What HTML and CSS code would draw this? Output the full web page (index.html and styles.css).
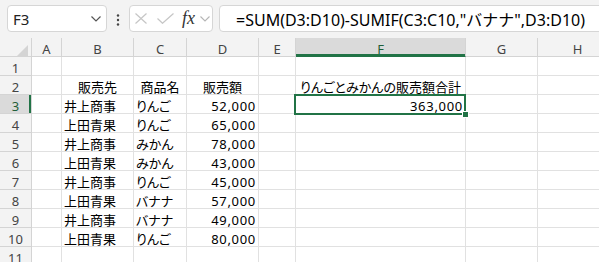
FILE: index.html
```html
<!DOCTYPE html>
<html lang="ja">
<head>
 <meta charset="UTF-8">
 <title>Excel SUMIF</title>
 <link rel="stylesheet" href="styles.css">
</head>
<body>
<div class="toolbar">
 <div class="namebox">
  <span>F3</span>
  <svg width="10" height="6" viewBox="0 0 10 6"><polyline points="0.5,0.5 5,5 9.5,0.5" fill="none" stroke="#555" stroke-width="1.2"/></svg>
 </div>
 <div class="grip">
  <svg width="4" height="12" viewBox="0 0 4 12"><circle cx="2" cy="1.5" r="1.2" fill="#444"/><circle cx="2" cy="6" r="1.2" fill="#444"/><circle cx="2" cy="10.5" r="1.2" fill="#444"/></svg>
 </div>
 <div class="fxbox">
  <svg class="cancel" width="12" height="11" viewBox="0 0 12 11"><path d="M0.5 0.5 L11.5 10.5 M11.5 0.5 L0.5 10.5" stroke="#c6c6c6" stroke-width="1.2" fill="none"/></svg>
  <svg class="enter" width="17" height="11" viewBox="0 0 17 11"><polyline points="0.5,5.5 5.5,10.3 16.5,0.5" stroke="#c6c6c6" stroke-width="1.2" fill="none"/></svg>
  <span class="fx">fx</span>
  <svg class="more" width="10" height="6" viewBox="0 0 10 6"><polyline points="0.5,0.5 5,5 9.5,0.5" fill="none" stroke="#b5b5b5" stroke-width="1.1"/></svg>
 </div>
 <div class="formula">=SUM(D3:D10)-SUMIF(C3:C10,"バナナ",D3:D10)</div>
</div>

<div class="sheet">
 <div class="hd corner"><svg width="11" height="11" viewBox="0 0 11 11"><polygon points="11,0 11,11 0,11" fill="#d4d4d4"/></svg></div>
 <div class="hd">A</div><div class="hd">B</div><div class="hd">C</div><div class="hd">D</div><div class="hd">E</div><div class="hd sel">F</div><div class="hd">G</div><div class="hd">H</div>

 <div class="rh">1</div><div></div><div></div><div></div><div></div><div></div><div></div><div></div><div></div>

 <div class="rh">2</div><div></div><div class="ctr">販売先</div><div class="ctr">商品名</div><div class="ctr">販売額</div><div></div><div class="ctr">りんごとみかんの販売額合計</div><div></div><div></div>

 <div class="rh sel">3</div><div></div><div>井上商事</div><div>りんご</div><div class="num">52,000</div><div></div><div class="num active">363,000<span class="handle"></span></div><div></div><div></div>

 <div class="rh">4</div><div></div><div>上田青果</div><div>りんご</div><div class="num">65,000</div><div></div><div></div><div></div><div></div>

 <div class="rh">5</div><div></div><div>井上商事</div><div>みかん</div><div class="num">78,000</div><div></div><div></div><div></div><div></div>

 <div class="rh">6</div><div></div><div>上田青果</div><div>みかん</div><div class="num">43,000</div><div></div><div></div><div></div><div></div>

 <div class="rh">7</div><div></div><div>井上商事</div><div>りんご</div><div class="num">45,000</div><div></div><div></div><div></div><div></div>

 <div class="rh">8</div><div></div><div>上田青果</div><div>バナナ</div><div class="num">57,000</div><div></div><div></div><div></div><div></div>

 <div class="rh">9</div><div></div><div>井上商事</div><div>バナナ</div><div class="num">49,000</div><div></div><div></div><div></div><div></div>

 <div class="rh">10</div><div></div><div>上田青果</div><div>りんご</div><div class="num">80,000</div><div></div><div></div><div></div><div></div>

 <div class="rh">11</div><div></div><div></div><div></div><div></div><div></div><div></div><div></div><div></div>
</div>
</body>
</html>
```

FILE: styles.css
```css
* {
    margin: 0;
    padding: 0;
    box-sizing: border-box;
}
body {
    width: 599px;
    height: 262px;
    overflow: hidden;
    background: #fff;
    font-family: "Noto Sans", "Noto Sans CJK JP", sans-serif;
    color: #000;
}

/* top bar: name box + formula bar */
.toolbar {
    display: flex;
    align-items: flex-start;
    height: 38px;
    padding: 5px 0 0 7px;
    background: #f3f3f3;
    overflow: hidden;
}
.namebox {
    display: flex;
    align-items: center;
    justify-content: space-between;
    flex: none;
    width: 100px;
    height: 27px;
    padding: 0 5px 0 5px;
    background: #fff;
    border: 1px solid #d6d6d6;
    border-radius: 4px;
    font-size: 15px;
    color: #222;
}
.grip {
    display: flex;
    justify-content: center;
    flex: none;
    width: 22px;
    padding-top: 9px;
}
.fxbox {
    display: flex;
    align-items: center;
    flex: none;
    width: 84px;
    height: 27px;
    padding-left: 5px;
    background: #fff;
    border: 1px solid #d6d6d6;
    border-radius: 4px;
}
.fxbox .enter {
    margin-left: 10px;
}
.fx {
    margin-left: 8px;
    font-family: "Liberation Serif", serif;
    font-style: italic;
    font-size: 18px;
    color: #333;
}
.fxbox .more {
    margin-left: 5px;
}
.formula {
    display: flex;
    align-items: center;
    flex: none;
    width: 420px;
    height: 27px;
    margin-left: 6px;
    padding-left: 16px;
    background: #fff;
    border: 1px solid #d6d6d6;
    border-radius: 4px;
    font-size: 16px;
    white-space: nowrap;
}

/* the grid */
.sheet {
    display: grid;
    grid-template-columns: 32px 30px 72px 53px 72px 37px 170px 72px 80px;
    grid-auto-rows: 19px;
}
.sheet > div {
    border-right: 1px solid #e1e1e1;
    border-bottom: 1px solid #e1e1e1;
    padding: 4px 2px 0;
    font-size: 13px;
    line-height: 15px;
    white-space: nowrap;
    font-feature-settings: "palt";
}
.sheet > .hd,
.sheet > .rh {
    background: #f3f3f3;
    color: #444;
    text-align: center;
    border-color: #d4d4d4;
}
.sheet > .corner {
    display: flex;
    justify-content: flex-end;
    align-items: flex-end;
    padding: 0 3px 0 0;
}
.sheet > .hd.sel {
    background: #dadada;
    color: #1e5e38;
    box-shadow: inset 0 -2px #217346;
    border-bottom-color: #217346;
}
.sheet > .rh.sel {
    background: #dadada;
    color: #1e5e38;
    box-shadow: inset -2px 0 #217346;
}
.sheet > .ctr {
    text-align: center;
}
.sheet > .num {
    text-align: right;
    padding-right: 2px;
    letter-spacing: 0.7px;
}
.active {
    position: relative;
}
.active::after {
    content: "";
    position: absolute;
    top: -1px;
    left: -2px;
    right: -1px;
    bottom: -2px;
    border: 2px solid #217346;
}
.handle {
    position: absolute;
    left: 166px;
    top: 16px;
    width: 7px;
    height: 7px;
    background: #217346;
    border: 1px solid #fff;
    z-index: 1;
}
```
